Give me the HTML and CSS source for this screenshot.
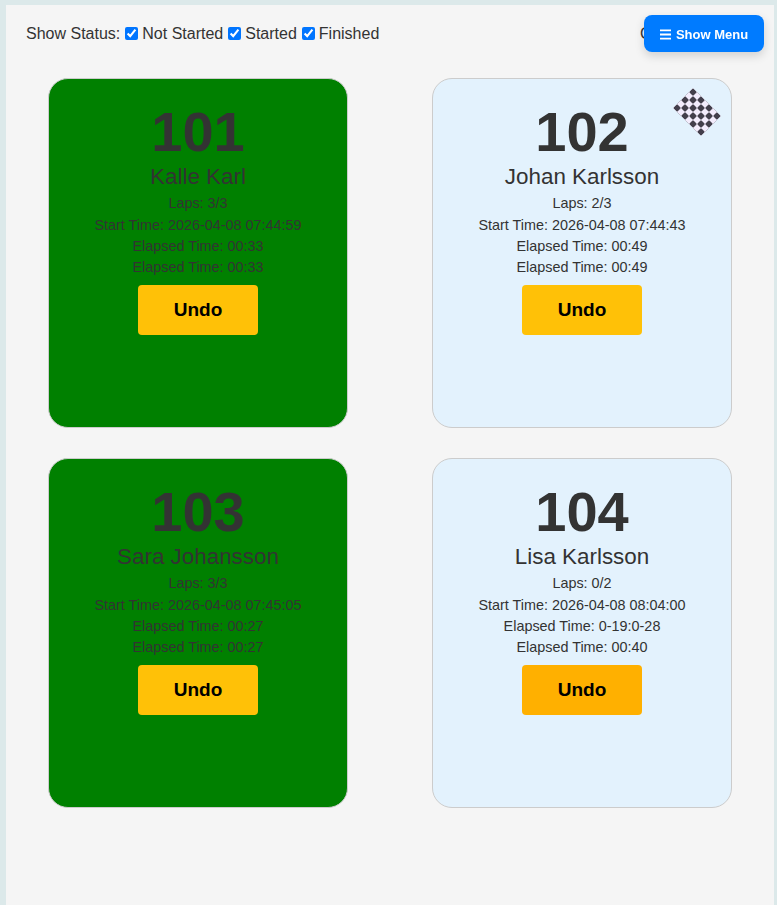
FILE: index.html
```html
<!DOCTYPE html>
<html lang="en">
<head>
<meta charset="utf-8">
<title>Race Status</title>
<link rel="stylesheet" href="styles.css">
</head>
<body>
<button class="menu-btn" type="button">
  <svg class="menu-icon" viewBox="0 0 12 12" width="11" height="11" aria-hidden="true"><path d="M0 1.5h12M0 6h12M0 10.500h12" stroke="#fff" stroke-width="2"/></svg>
  Show Menu
</button>
<main class="container">
  <header class="toolbar">
    <div class="filters">
      <span>Show Status:</span>
      <label class="filter"><input type="checkbox" checked>Not Started</label>
      <label class="filter"><input type="checkbox" checked>Started</label>
      <label class="filter"><input type="checkbox" checked>Finished</label>
    </div>
    <div class="clock">Clock</div>
  </header>
  <section class="grid">
    <article class="card done">
      <h1 class="num">101</h1>
      <h2 class="name">Kalle Karl</h2>
      <p class="line">Laps: 3/3</p>
      <p class="line">Start Time: 2026-04-08 07:44:59</p>
      <p class="line">Elapsed Time: 00:33</p>
      <p class="line">Elapsed Time: 00:33</p>
      <button class="undo" type="button">Undo</button>
    </article>
    <article class="card">
      <svg class="flag" viewBox="0 0 48 48" width="48" height="48" aria-hidden="true">
        <defs>
          <pattern id="dots" width="11.32" height="11.32" patternUnits="userSpaceOnUse" x="4.19" y="9.85">
            <rect x="0" y="0" width="5.66" height="5.66" rx="1.2" fill="#433f4b"/>
            <rect x="5.66" y="5.66" width="5.66" height="5.66" rx="1.2" fill="#433f4b"/>
          </pattern>
        </defs>
        <g transform="rotate(45 24 24)">
          <rect x="4.19" y="9.85" width="39.62" height="28.3" fill="#f3ecfc"/>
          <rect x="4.19" y="9.85" width="39.62" height="28.3" fill="url(#dots)"/>
        </g>
      </svg>
      <h1 class="num">102</h1>
      <h2 class="name">Johan Karlsson</h2>
      <p class="line">Laps: 2/3</p>
      <p class="line">Start Time: 2026-04-08 07:44:43</p>
      <p class="line">Elapsed Time: 00:49</p>
      <p class="line">Elapsed Time: 00:49</p>
      <button class="undo" type="button">Undo</button>
    </article>
    <article class="card done">
      <h1 class="num">103</h1>
      <h2 class="name">Sara Johansson</h2>
      <p class="line">Laps: 3/3</p>
      <p class="line">Start Time: 2026-04-08 07:45:05</p>
      <p class="line">Elapsed Time: 00:27</p>
      <p class="line">Elapsed Time: 00:27</p>
      <button class="undo" type="button">Undo</button>
    </article>
    <article class="card">
      <h1 class="num">104</h1>
      <h2 class="name">Lisa Karlsson</h2>
      <p class="line">Laps: 0/2</p>
      <p class="line">Start Time: 2026-04-08 08:04:00</p>
      <p class="line">Elapsed Time: 0-19:0-28</p>
      <p class="line">Elapsed Time: 00:40</p>
      <button class="undo hover" type="button">Undo</button>
    </article>
  </section>
</main>
</body>
</html>
```

FILE: styles.css
```css
* { box-sizing: border-box; }
html, body { height: 100%; }
body {
  margin: 0;
  padding: 5px 3px 0 6px;
  background: #dce9ea;
  font-family: "Liberation Sans", Arial, sans-serif;
  color: #333;
  overflow: hidden;
}
.container {
  min-height: 100%;
  background: #f5f5f5;
  padding: 19px 0 0;
}
.toolbar {
  display: flex;
  justify-content: space-between;
  align-items: center;
  padding: 0 94px 0 20px;
  height: 20px;
  font-size: 16px;
}
.filters { display: flex; align-items: center; gap: 4px; }
.filter { display: flex; align-items: center; }
.filter input {
  width: 13px;
  height: 13px;
  margin: -2px 4px 0 1px;
  accent-color: #0075ff;
}
.clock { white-space: nowrap; }
.grid {
  display: grid;
  grid-template-columns: 1fr 1fr;
  row-gap: 30px;
  justify-items: center;
  margin-top: 34px;
}
.card {
  position: relative;
  width: 300px;
  height: 350px;
  padding: 24px 0 0;
  background: #e3f2fd;
  border: 1px solid #ccc;
  border-radius: 20px;
  text-align: center;
}
.card.done { background: #008000; }
.num {
  margin: 0;
  font-size: 56px;
  line-height: 58px;
  font-weight: 700;
}
.name {
  margin: 3px 0 3.3px;
  font-size: 22.4px;
  line-height: 26px;
  font-weight: 400;
}
.line {
  margin: 0;
  font-size: 14.4px;
  line-height: 21.3px;
}
.undo {
  display: block;
  width: 120px;
  height: 50px;
  margin: 6.7px auto 0;
  padding: 0 0 1px;
  border: 0;
  border-radius: 4px;
  background: #ffc107;
  color: #000;
  font: 700 19px "Liberation Sans", Arial, sans-serif;
}
.undo.hover { background: #ffb000; }
.flag { position: absolute; top: 9px; right: 10px; }
.menu-btn {
  position: fixed;
  top: 15px;
  left: 644px;
  width: 120px;
  height: 37px;
  padding: 1px 0 0;
  display: flex;
  align-items: center;
  justify-content: center;
  gap: 5px;
  border: 0;
  border-radius: 8px;
  background: #007bff;
  color: #fff;
  font: 700 13px "Liberation Sans", Arial, sans-serif;
  box-shadow: 0 4px 10px rgba(0, 0, 0, 0.15);
}
```
